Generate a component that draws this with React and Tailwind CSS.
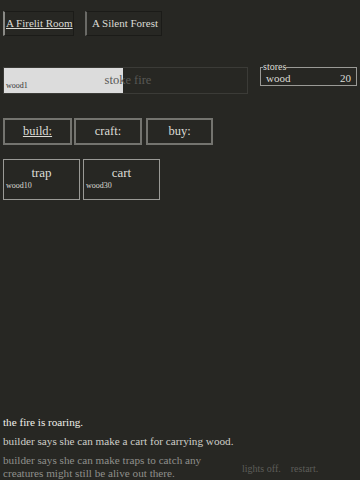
export default function App() {
  const serif = { fontFamily: '"Liberation Serif", "Times New Roman", serif' };
  return (
    <div style={serif} className="relative w-[360px] h-[480px] overflow-hidden bg-[#272723] text-[#dcdcd6]">
      {/* Tabs */}
      <div className="flex gap-[11px] pl-[3px] pt-[11px]">
        <div className="w-[71px] h-[25px] pl-[1px] flex items-center whitespace-nowrap border border-[#1b1b18] border-l-2 border-l-[#8a8a86] text-[11px] underline">
          A Firelit Room
        </div>
        <div className="w-[77px] h-[25px] pl-[5px] flex items-center whitespace-nowrap border border-[#1b1b18] border-l-2 border-l-[#6a6a66] text-[11px]">
          A Silent Forest
        </div>
      </div>

      {/* Stoke fire + stores */}
      <div className="flex items-start mt-[31px] pl-[3px]">
        <div className="relative w-[245px] h-[27px] border border-[#3b3b37] text-[12.5px] text-[#585855]">
          <div className="absolute left-0 top-0 bottom-0 w-[119px] bg-[#dcdcdc]" />
          <div className="absolute left-[2px] bottom-[1px] text-[8px] text-[#333]">wood1</div>
          <div className="relative h-full flex items-center justify-center pl-[5px]">stoke fire</div>
        </div>
        <fieldset className="ml-[12px] -mt-[5px] w-[97px] border border-[#9a9a96] px-[5px] pb-0">
          <legend className="text-[10px] leading-[10px] px-0 -ml-[3px]">stores</legend>
          <div className="flex justify-between text-[11px] leading-[13px]">
            <span>wood</span>
            <span>20</span>
          </div>
        </fieldset>
      </div>

      {/* Build / craft / buy */}
      <div className="flex gap-[2px] pl-[3px] mt-[24px]">
        <div className="w-[69px] h-[27px] border-2 border-[#74746f] flex items-center justify-center text-[12.5px] underline">build:</div>
        <div className="w-[68px] h-[27px] border-2 border-[#74746f] flex items-center justify-center text-[12.5px]">craft:</div>
        <div className="ml-[2px] w-[67px] h-[27px] border-2 border-[#74746f] flex items-center justify-center text-[12.5px]">buy:</div>
      </div>

      {/* Build items */}
      <div className="flex gap-[3px] pl-[3px] mt-[14px]">
        {[['trap', 'wood10'], ['cart', 'wood30']].map(([name, cost]) => (
          <div key={name} className="relative w-[77px] h-[41px] border border-[#9a9a96]">
            <div className="text-center text-[13px] leading-[14px] mt-[6px]">{name}</div>
            <div className="absolute left-[2px] top-[20px] text-[8px]">{cost}</div>
          </div>
        ))}
      </div>

      {/* Notifications */}
      <div className="absolute left-[3px] top-[415px] text-[11.2px] leading-[14px]">
        <div className="text-[#f0f0ea]">the fire is roaring.</div>
        <div className="mt-[5px] text-[#cfcfc9]">builder says she can make a cart for carrying wood.</div>
        <div className="mt-[6px] w-[215px] text-[#8f8f8b] leading-[13px]">builder says she can make traps to catch any creatures might still be alive out there.</div>
      </div>

      {/* Footer links */}
      <div className="absolute left-[242px] top-[461px] flex gap-[10px] text-[10px] text-[#5d5d59]">
        <span>lights off.</span>
        <span>restart.</span>
      </div>
    </div>
  );
}
